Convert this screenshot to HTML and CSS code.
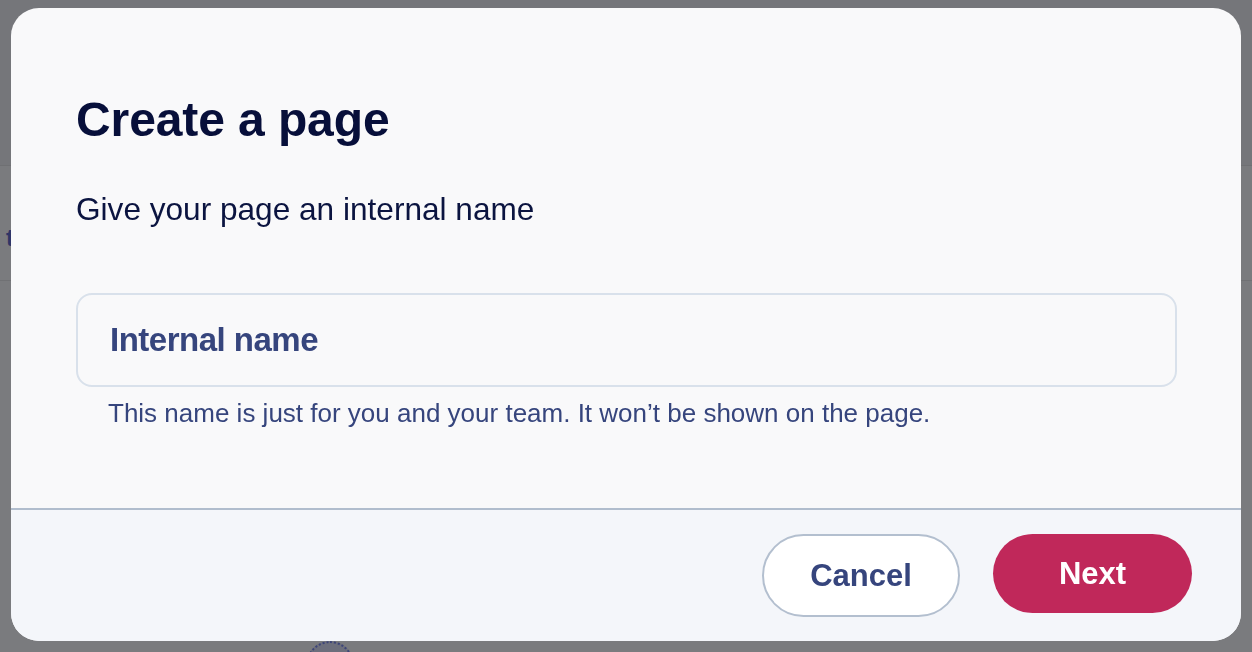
FILE: index.html
```html
<!DOCTYPE html>
<html lang="en">
<head>
<meta charset="utf-8">
<title>Create a page</title>
<link rel="stylesheet" href="styles.css">
</head>
<body>
  <div class="backdrop">
    <div class="bg-header"></div>
    <div class="bg-toolbar"><span class="bg-tab">t</span></div>
    <div class="bg-content">
      <div class="bg-avatar"></div>
    </div>
  </div>

  <div class="modal" role="dialog" aria-labelledby="modal-title">
    <div class="modal-body">
      <h1 class="modal-title" id="modal-title">Create a page</h1>
      <p class="modal-subtitle">Give your page an internal name</p>
      <input class="name-input" type="text" placeholder="Internal name">
      <p class="helper">This name is just for you and your team. It won’t be shown on the page.</p>
    </div>
    <div class="modal-footer">
      <button class="btn btn-cancel" type="button">Cancel</button>
      <button class="btn btn-next" type="button">Next</button>
    </div>
  </div>
</body>
</html>
```

FILE: styles.css
```css
* { box-sizing: border-box; }

html, body {
  margin: 0;
  padding: 0;
}

body {
  width: 1252px;
  height: 652px;
  overflow: hidden;
  font-family: "Liberation Sans", Arial, sans-serif;
  background: #75767a;
}

/* dimmed page behind the dialog */
.backdrop {
  display: flex;
  flex-direction: column;
  height: 652px;
  overflow: hidden;
}

.bg-header {
  height: 166px;
  flex: none;
  background: #75767a;
  border-bottom: 1px solid #6f7073;
}

.bg-toolbar {
  height: 115px;
  flex: none;
  background: #7a7b7e;
  border-bottom: 1px solid #707174;
  display: flex;
  align-items: center;
  padding-left: 6px;
}

.bg-tab {
  font-size: 24px;
  font-weight: 700;
  color: #2f3566;
  margin-top: 30px;
}

.bg-content {
  flex: 1;
  background: #7a7b7e;
  position: relative;
  overflow: hidden;
}

.bg-avatar {
  position: absolute;
  left: 306px;
  top: 360px;
  width: 48px;
  height: 48px;
  border-radius: 50%;
  border: 2px dotted #3d4578;
  background: radial-gradient(circle at 50% 60%, #2a3168 0 14px, #6c6e7c 15px);
}

/* dialog */
.modal {
  position: fixed;
  left: 11px;
  top: 8px;
  width: 1230px;
  height: 633px;
  border-radius: 28px;
  background: #f9f9fa;
  overflow: hidden;
  display: flex;
  flex-direction: column;
}

.modal-body {
  flex: 1;
  padding: 84px 65px 0 65px;
  display: flex;
  flex-direction: column;
  align-items: flex-start;
}

.modal-title {
  margin: 0;
  font-size: 48px;
  line-height: 56px;
  font-weight: 700;
  color: #070f3a;
  letter-spacing: -0.1px;
}

.modal-subtitle {
  margin: 42px 0 0 0;
  font-size: 31.6px;
  line-height: 38px;
  color: #0b1440;
}

.name-input {
  margin-top: 65px;
  width: 1101px;
  height: 94px;
  border: 2px solid #d9e1eb;
  border-radius: 16px;
  background: #f9f9fa;
  padding: 0 32px;
  font-family: "Liberation Sans", Arial, sans-serif;
  font-size: 33px;
  font-weight: 700;
  letter-spacing: -0.5px;
  color: #36457d;
  outline: none;
}

.name-input::placeholder {
  color: #36457d;
  opacity: 1;
}

.helper {
  margin: 10px 0 0 32px;
  font-size: 26px;
  line-height: 32px;
  color: #36457d;
}

.modal-footer {
  height: 133px;
  flex: none;
  border-top: 2px solid #b1bdcd;
  background: #f4f6fa;
  display: flex;
  justify-content: flex-end;
  align-items: flex-start;
  gap: 33px;
  padding: 24px 49px 0 0;
}

.btn {
  font-family: "Liberation Sans", Arial, sans-serif;
  font-size: 31px;
  font-weight: 700;
  border-radius: 999px;
  cursor: pointer;
  padding: 0;
}

.btn-cancel {
  width: 198px;
  height: 83px;
  background: #ffffff;
  border: 2px solid #b3bfcf;
  color: #36457d;
}

.btn-next {
  width: 199px;
  height: 79px;
  background: #c0285a;
  border: none;
  color: #ffffff;
}
```
